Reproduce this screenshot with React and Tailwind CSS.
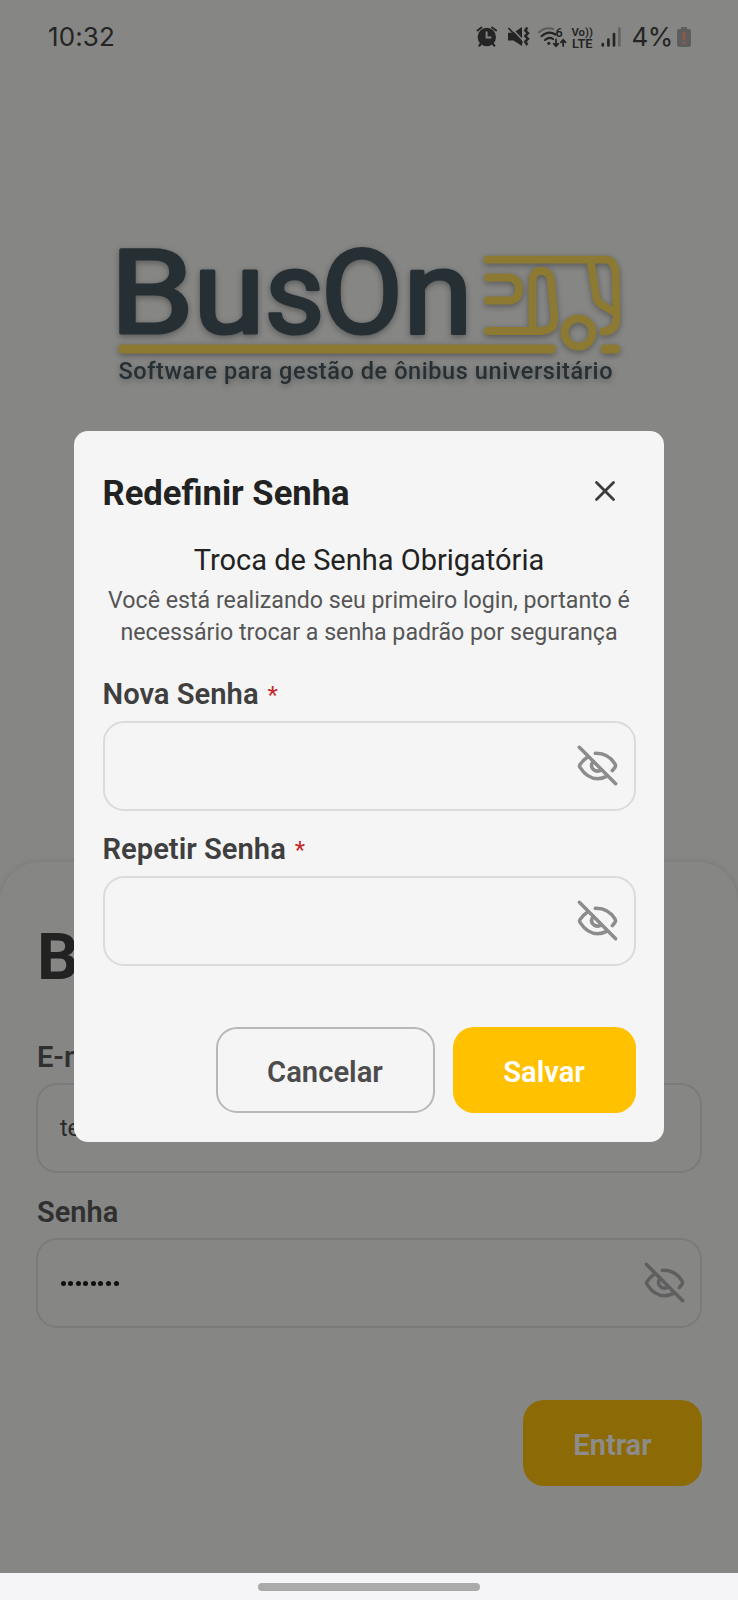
import React from "react";

const ink = "#455760";
const gold = "#ffdd5c";

function EyeOff({ className = "" }) {
  return (
    <svg
      viewBox="0 0 168 168"
      className={"h-[56px] w-[56px] shrink-0 " + className}
      fill="none"
      stroke="currentColor"
      strokeWidth="10.5"
      strokeLinecap="round"
      strokeLinejoin="round"
    >
      <path d="M28 28 L137 137" />
      <path d="M53 57 Q39 66 30 80 Q27 84 30 88 Q52 122 83 122 Q96 122 108 116" />
      <path d="M76 46 Q115 45 135 78 Q138 83 135 88 L127 98" />
      <path d="M70 70 Q61 80 67 91 Q79 105 95 96" />
    </svg>
  );
}

function StatusBar() {
  return (
    <div className="flex h-[74px] shrink-0 items-center pr-[46px] pl-[48px] text-[#434343]">
      <span className="font-['Inter',sans-serif] text-[26px] leading-none tracking-[0.1px]">10:32</span>
      <svg className="ml-auto" width="148" height="32" viewBox="0 0 148 32" fill="none" stroke="currentColor">
        {/* alarm */}
        <g strokeLinecap="round" transform="translate(1 0)">
          <circle cx="12.8" cy="16" r="9.2" fill="currentColor" stroke="none" />
          <path d="M3.500 9.500 L7.500 6.500 M18 6.500 L22.200 9.500" strokeWidth="2" />
          <path d="M5.500 24.500 L7.500 22 M20.300 24.500 L18 22" strokeWidth="2.4" />
          <path d="M12.600 10.500 V16.500 H17.300" stroke="#f0f0f0" strokeWidth="1.9" strokeLinecap="butt" />
        </g>
        {/* muted with vibration */}
        <g transform="translate(1 0)">
          <path d="M34 11.800 H39.500 L48 6 V25 L39.500 19.500 H34 Z" fill="currentColor" stroke="none" />
          <path d="M36 5.500 L50 20.500" stroke="#f1f1ef" strokeWidth="1.500" />
          <path d="M34.500 7 L48.500 22" strokeWidth="1.800" />
          <path d="M53.300 6.500 L51.300 9.500 L54 12.200 L51.300 15 L54 17.800 L51.300 20.600 L53.300 24" strokeWidth="2.500" />
        </g>
        {/* wifi */}
        <g strokeWidth="2.200" strokeLinecap="round" transform="translate(0.5 0)">
          <path d="M65.500 11.300 Q72 5.500 79.500 8" opacity="0.45" />
          <path d="M68 15.200 Q75 9 82 13.500" />
          <path d="M71.500 19 Q76 15.200 79.500 18" />
          <circle cx="75.300" cy="22.300" r="1.600" fill="currentColor" stroke="none" />
          <path d="M82.500 18.500 V25 M80.200 22.700 L82.500 25.200 L84.800 22.700 M89.700 25 V19 M87.400 21.300 L89.700 18.800 L92 21.300" strokeWidth="1.800" />
        </g>
        <g fill="currentColor" stroke="none" fontFamily="Roboto, sans-serif" fontWeight="600">
          <text x="82.500" y="15.500" fontSize="12.500">6</text>
          <text x="98.500" y="14.500" fontSize="11.500" textLength="21.500" lengthAdjust="spacingAndGlyphs">Vo))</text>
          <text x="99" y="26.600" fontSize="12.500" textLength="20.500" lengthAdjust="spacingAndGlyphs">LTE</text>
        </g>
        {/* signal */}
        <g strokeWidth="2.7" strokeLinecap="round">
          <path d="M129.800 24.500 V23.200 M135.400 24.500 V18.500 M141 24.500 V13" />
          <path d="M146.300 24.500 V7.500" opacity="0.35" />
        </g>
      </svg>
      <span className="ml-[10px] font-['Inter',sans-serif] text-[26px] leading-none tracking-[-0.4px]">4%</span>
      <svg className="ml-[3px]" width="16" height="22" viewBox="0 0 16 22">
        <path d="M5 1 h6 v2 h2 q2 0 2 2 v13 q0 3 -3 3 h-8 q-3 0 -3 -3 v-13 q0 -2 2 -2 h2 z" fill="#aaa" />
        <path d="M8 6 V13.500 M8 15.500 V18" stroke="#ffa585" strokeWidth="3.200" />
      </svg>
    </div>
  );
}

function Logo() {
  return (
    <svg
      width="530"
      height="190"
      viewBox="104 215 530 190"
      className="mx-auto block drop-shadow-[0_2px_3px_rgba(0,0,0,0.35)]"
    >
      <g
        fill={ink}
        stroke={ink}
        strokeWidth="3.2"
        strokeLinejoin="round"
        fontFamily="Roboto, sans-serif"
        fontWeight="400"
        fontSize="116"
      >
        <text x="110" y="333.300" textLength="84" lengthAdjust="spacingAndGlyphs">B</text>
        <text x="193" y="333.300" textLength="72" lengthAdjust="spacingAndGlyphs">u</text>
        <text x="264.500" y="333.300" textLength="60" lengthAdjust="spacingAndGlyphs">s</text>
        <text x="321" y="333.300" textLength="82" lengthAdjust="spacingAndGlyphs">O</text>
        <text x="403.300" y="333.300" textLength="69.500" lengthAdjust="spacingAndGlyphs">n</text>
      </g>
      <g fill="none" stroke={gold} strokeWidth="7.8" strokeLinecap="round" strokeLinejoin="round">
        <path d="M487.500 259.700 H606 Q614 260.500 615.500 271 L616.500 318 Q616 331.500 603.500 331.500" />
        <path d="M591 263 L596 296 Q597 302 602 305 L616 313" />
        <path d="M488 277.500 H508 Q519 278 519 289 Q519 300.500 508 300.500 H488" />
        <path d="M488 331 H542 Q554.500 330 554.500 318 L551 280 Q549.500 271 541 271 Q533 271 532.500 280 V330" />
        <circle cx="578.5" cy="332.500" r="14" />
      </g>
      <rect x="118.500" y="344.500" width="437" height="9" rx="3" fill={gold} />
      <rect x="601" y="344.500" width="19" height="9" rx="4" fill={gold} />
      <text
        x="118.500"
        y="378.500"
        fill={ink}
        fontFamily="Roboto, sans-serif"
        fontWeight="500"
        fontSize="23.500"
        textLength="494"
      >
        Software para gestão de ônibus universitário
      </text>
    </svg>
  );
}

function LoginSheet() {
  return (
    <div className="flex h-[711px] flex-col rounded-t-[40px] px-[36px] shadow-[0_-1px_6px_rgba(0,0,0,0.09)]">
      <h1 className="mt-[56px] ml-px h-[77px] text-[65.500px] leading-[77px] font-bold text-[#3e3e3e]">Bem-vindo</h1>
      <label className="mt-[45px] ml-px text-[29px] leading-[34px] font-semibold text-[#585858]">E-mail</label>
      <div className="mt-[9px] flex h-[90px] shrink-0 items-center rounded-[21px] border-2 border-[#dedede] pt-[3px] pl-[22px] text-[23px] text-[#4c4c4c]">
        teste@teste.com
      </div>
      <label className="mt-[22px] ml-px text-[29px] leading-[34px] font-semibold text-[#585858]">Senha</label>
      <div className="mt-[9px] flex h-[90px] shrink-0 items-center justify-between rounded-[21px] border-2 border-[#dedede] pr-[7px] pl-[22.500px]">
        <div className="flex gap-[2.600px]">
          {Array.from({ length: 8 }, (_, i) => (
            <i key={i} className="block h-[5px] w-[5px] rounded-full bg-[#1c1c1c]" />
          ))}
        </div>
        <EyeOff className="text-[#adadad]" />
      </div>
      <button className="mt-[72px] h-[86px] w-[179px] self-end rounded-[21px] bg-[#ffc30b] pt-[5px] text-[29px] font-semibold text-white">
        Entrar
      </button>
    </div>
  );
}

function PasswordField({ label }) {
  return (
    <div className="mt-[22px] first:mt-0">
      <label className="flex h-[34px] items-center text-[29.200px] font-semibold text-[#3f3f3f]">
        {label}
        <span className="ml-[9px] text-[24px] font-normal text-[#c62828]">*</span>
      </label>
      <div className="mt-[9px] flex h-[90px] items-center justify-end rounded-[21px] border-2 border-[#dbdbdb] pr-[7.500px]">
        <EyeOff className="text-[#8c8c8c]" />
      </div>
    </div>
  );
}

function ResetDialog() {
  return (
    <section className="flex h-[711px] w-[590px] flex-col rounded-[14px] bg-[#f5f5f5] px-[28.500px]">
      <header className="mt-[41px] flex h-[42px] items-center justify-between pr-[20px]">
        <h2 className="text-[34.600px] leading-[42px] font-bold text-[#222]">Redefinir Senha</h2>
        <svg width="22" height="22" viewBox="0 0 22 22" stroke="#3c3c3c" strokeWidth="2.800" strokeLinecap="round" className="-mt-[4px]">
          <path d="M2.500 2.500 L19.500 19.500 M19.500 2.500 L2.500 19.500" />
        </svg>
      </header>
      <p className="mt-[27px] h-[38px] text-center text-[29px] leading-[38px] text-[#222]">Troca de Senha Obrigatória</p>
      <p className="-mx-4 mt-[4.500px] text-center text-[23.200px] leading-[32px] text-[#555]">
        Você está realizando seu primeiro login, portanto é
        <br />
        necessário trocar a senha padrão por segurança
      </p>
      <div className="mt-[30.500px]">
        <PasswordField label="Nova Senha" />
        <PasswordField label="Repetir Senha" />
      </div>
      <footer className="mt-[61px] flex justify-end gap-[18px] text-[29.200px] font-semibold">
        <button className="h-[86px] w-[219px] rounded-[21px] border-2 border-[#b8b8b8] pt-[5px] text-[#4c4c4c]">Cancelar</button>
        <button className="h-[86px] w-[183px] rounded-[21px] bg-[#ffc100] pt-[5px] text-white">Salvar</button>
      </footer>
    </section>
  );
}

export default function App() {
  return (
    <div className="flex h-[1600px] w-[738px] flex-col bg-[#f5f5f7] font-['Roboto',sans-serif]">
      <main className="relative h-[1573px] shrink-0 overflow-hidden bg-[#f4f4f1]">
        <StatusBar />
        <div className="h-[788px] pt-[141px]">
          <Logo />
        </div>
        <LoginSheet />
        <div className="absolute inset-0 flex justify-center bg-black/45 pt-[431px]">
          <ResetDialog />
        </div>
      </main>
      <div className="flex h-[27px] justify-center pt-[10px]">
        <div className="h-[7.500px] w-[222px] rounded-full bg-[#aaa]" />
      </div>
    </div>
  );
}
